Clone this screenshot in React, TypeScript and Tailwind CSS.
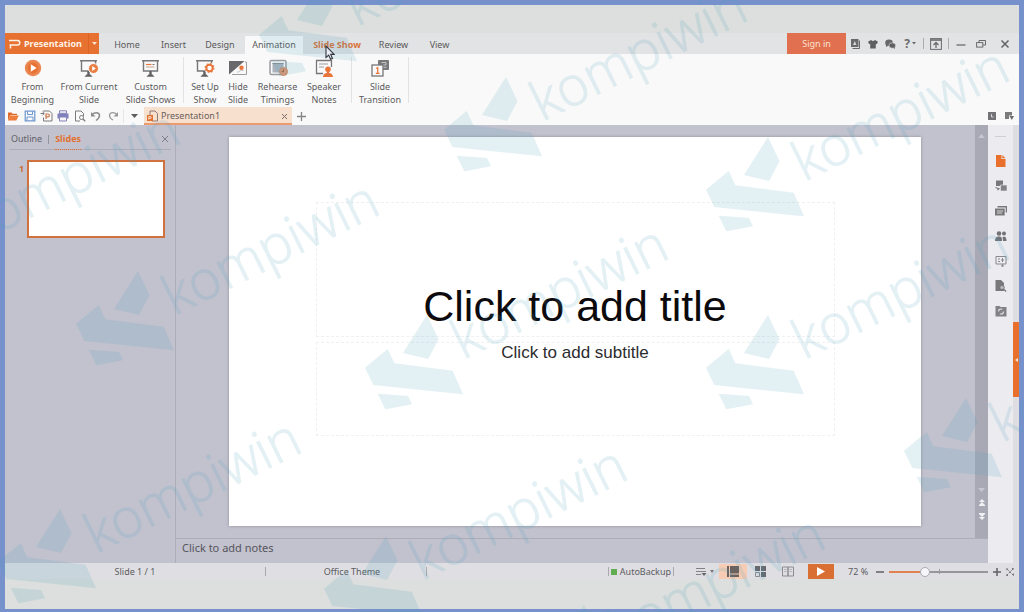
import React, { useState } from "react";

type IconProps = { children: React.ReactNode; w?: number; h?: number };

function Icon({ children, w = 18, h = 18 }: IconProps) {
  return (
    <svg width={w} height={h} viewBox={`0 0 ${w} ${h}`} fill="none" aria-hidden="true" className="shrink-0">
      {children}
    </svg>
  );
}

const GRAY = "#77777a";
const ORANGE = "#e8763a";

function Board() {
  return (
    <>
      <path d="M1 1.800h17M2.500 2v10h14V2" stroke={GRAY} strokeWidth="1.400" />
      <path d="M9.500 12v4" stroke="#606062" strokeWidth="2.400" />
      <path d="M5.500 17.800l2-2.300h4l2 2.300z" fill="#606062" />
    </>
  );
}

type Tool = { lines: [string, string]; width: string; icon: React.ReactNode };

const playTools: Tool[] = [
  {
    lines: ["From", "Beginning"],
    width: "w-[55px]",
    icon: (
      <Icon>
        <circle cx="9" cy="9" r="8.200" fill="#ea8650" />
        <circle cx="9" cy="9" r="5.400" fill="#e87234" />
        <path d="M6.800 5.200v7.600L12.600 9z" fill="#fff" />
      </Icon>
    ),
  },
  {
    lines: ["From Current", "Slide"],
    width: "w-[58px]",
    icon: (
      <Icon w={20}>
        <Board />
        <circle cx="14.500" cy="9.500" r="5" fill="#ea7d42" stroke="#fafafa" />
        <path d="M13.200 7v5l3.600-2.500z" fill="#fff" />
      </Icon>
    ),
  },
  {
    lines: ["Custom", "Slide Shows"],
    width: "w-[65px]",
    icon: (
      <Icon w={20}>
        <Board />
        <path d="M5 5.500h5.500" stroke={ORANGE} strokeWidth="1.200" />
        <path d="M11.500 5.500h2" stroke={GRAY} strokeWidth="1" />
        <path d="M5 8h8.500" stroke="#c8a48e" strokeWidth="1" />
      </Icon>
    ),
  },
];

const setupTools: Tool[] = [
  {
    lines: ["Set Up", "Show"],
    width: "w-[34px]",
    icon: (
      <Icon w={20}>
        <Board />
        <circle cx="14.500" cy="9" r="5.500" fill="#fafafa" />
        <circle cx="14.500" cy="9" r="3.200" stroke={ORANGE} strokeWidth="2" />
        <circle cx="14.500" cy="9" r="4.400" stroke={ORANGE} strokeWidth="1.200" strokeDasharray="1.700 1.750" />
      </Icon>
    ),
  },
  {
    lines: ["Hide", "Slide"],
    width: "w-[32px]",
    icon: (
      <Icon>
        <path d="M0 2h15.500L0 15.500z" fill="#69696b" />
        <path d="M16 3h1.500v12.500H3" stroke="#9d9d9f" />
        <circle cx="12.500" cy="8.800" r="2.200" fill={ORANGE} />
        <path d="M8 13h2l1-1.500h3.500" stroke="#c9c9cb" />
      </Icon>
    ),
  },
  {
    lines: ["Rehearse", "Timings"],
    width: "w-[47px]",
    icon: (
      <Icon w={20}>
        <rect x="2" y="1.500" width="16" height="14" rx="1.500" stroke="#9a9ca2" strokeWidth="1.500" />
        <rect x="4.500" y="4" width="11" height="9.500" fill="#aab2bc" />
        <path d="M4.500 4.500h11" stroke="#8a8c92" />
        <circle cx="15.500" cy="12.500" r="4" fill="#e39a72" stroke="#cf8a68" />
        <path d="M15.500 10.300v2.400h-2" stroke="#9d5f45" />
      </Icon>
    ),
  },
  {
    lines: ["Speaker", "Notes"],
    width: "w-[46px]",
    icon: (
      <Icon>
        <path d="M8 14.500H1.500V1.500h15V8" stroke="#77777a" strokeWidth="1.300" />
        <path d="M4 5h9M4 8h5" stroke="#9b9b9e" strokeWidth="1.200" />
        <circle cx="13" cy="10.300" r="2.800" fill={ORANGE} />
        <path d="M8 18c0-3 2.200-3.800 3.900-4v-1.500h2.200V14c1.700.2 3.900 1 3.900 4z" fill={ORANGE} />
      </Icon>
    ),
  },
];

const transitionTools: Tool[] = [
  {
    lines: ["Slide", "Transition"],
    width: "w-[56px]",
    icon: (
      <Icon>
        <rect x="7" y="1" width="11" height="10" rx="1" fill="#78787a" />
        <path d="M10.500 3.500h4.500v2.500h-3v2.300h3.500" stroke="#c4c4c6" />
        <rect x="1" y="6" width="11" height="11" fill="#fafafa" stroke="#77777a" strokeWidth="1.300" />
        <path d="M5 9.500l1.700-.8v5.600M4.800 14.300h3.800" stroke={ORANGE} strokeWidth="1.300" />
      </Icon>
    ),
  },
];

function ToolGroup({ tools }: { tools: Tool[] }) {
  return (
    <div className="flex">
      {tools.map((t) => (
        <button key={t.lines.join(" ")} type="button" className={`flex flex-col items-center gap-[3px] whitespace-nowrap ${t.width}`}>
          {t.icon}
          <span className="text-[9px] leading-[13px] text-[#5b5b5d]">
            {t.lines[0]}
            <br />
            {t.lines[1]}
          </span>
        </button>
      ))}
    </div>
  );
}

const menuTabs = [
  { label: "Home", cls: "w-[46px]" },
  { label: "Insert", cls: "w-[47px]" },
  { label: "Design", cls: "w-[46px]" },
  { label: "Animation", cls: "w-[58px] bg-[#f9f9f9] ml-[2px]" },
  { label: "Slide Show", cls: "w-[68px] font-bold text-[#d9713a]" },
  { label: "Review", cls: "w-[45px]" },
  { label: "View", cls: "w-[47px]" },
];

function MenuBar() {
  return (
    <header className="flex h-[21px] bg-[#e2e3e5] text-[9px] text-[#59595b]">
      <button type="button" className="flex w-[94px] shrink-0 items-center bg-[#e67130] pl-[3px] font-bold text-[#fff1e6]">
        <Icon w={13} h={12}>
          <path d="M1 2.500h8.500a2 2 0 0 1 0 4.500H1.500M2.500 7v3.500" stroke="#fff1e6" strokeWidth="1.500" />
        </Icon>
        <span className="ml-[3px] flex-1 text-left">Presentation</span>
        <span className="flex h-full w-[11px] items-center justify-center border-l border-[#dd6423]">
          <Icon w={5} h={3}>
            <path d="M0 0h5L2.500 3z" fill="#ffe4d2" />
          </Icon>
        </span>
      </button>
      <nav className="ml-[5px] flex items-stretch pt-[3px]">
        {menuTabs.map((t) => (
          <button key={t.label} type="button" className={`whitespace-nowrap ${t.cls}`}>
            {t.label}
          </button>
        ))}
      </nav>
      <div className="ml-auto flex items-stretch">
        <button type="button" className="w-[59px] bg-[#e07050] text-[#ffe2d0]">
          Sign in
        </button>
        <button type="button" aria-label="Account" className="flex w-[19px] items-center justify-center">
          <Icon w={9} h={10}>
            <path d="M0 0h7.500v8H0z" fill="#69696b" />
            <path d="M8.500 1.500v8H1.500" stroke="#69696b" />
            <path d="M2 6l1.800-4L5.500 6z" fill="#d5d5d7" />
          </Icon>
        </button>
        <button type="button" aria-label="Skin" className="flex w-[16px] items-center justify-center">
          <Icon w={10} h={10}>
            <path d="M3 1l2 1.200L7 1l3 1.800-1.200 2.400-1-.4V9.500H2.200V4.800l-1 .4L0 2.800z" fill="#5f5f61" />
          </Icon>
        </button>
        <button type="button" aria-label="Chat" className="flex w-[18px] items-center justify-center">
          <Icon w={11} h={10}>
            <ellipse cx="4" cy="3.700" rx="3.800" ry="3.200" fill="#69696b" />
            <path d="M1 5v3l2.500-1.500z" fill="#69696b" />
            <ellipse cx="7.300" cy="6.500" rx="3.300" ry="2.700" fill="#5f5f61" stroke="#e2e3e5" strokeWidth=".6" />
            <path d="M8 8.500l1.800 1.500V8z" fill="#5f5f61" />
          </Icon>
        </button>
        <button type="button" className="flex w-[22px] items-center justify-center gap-[2px] text-[12px] font-bold text-[#6b6b6d]">
          ?
          <Icon w={4} h={3}>
            <path d="M0 0h4L2 2.500z" fill="#6b6b6d" />
          </Icon>
        </button>
        <i className="mx-[2px] my-[5px] w-px bg-[#adadaf]" />
        <button type="button" aria-label="Collapse ribbon" className="flex w-[20px] items-center justify-center">
          <Icon w={12} h={12}>
            <rect x=".6" y=".6" width="10.800" height="10.800" stroke="#6b6b6d" />
            <path d="M0 2h12" stroke="#6b6b6d" strokeWidth="1.600" />
            <path d="M6 10V5M3.500 7L6 4.500 8.500 7" stroke="#6b6b6d" strokeWidth="1.300" />
          </Icon>
        </button>
        <i className="mx-[2px] my-[5px] w-px bg-[#adadaf]" />
        <button type="button" aria-label="Minimize" className="flex w-[20px] items-center justify-center">
          <Icon w={10} h={10}>
            <path d="M.5 6h9" stroke="#6b6b6d" strokeWidth="1.300" />
          </Icon>
        </button>
        <button type="button" aria-label="Restore" className="flex w-[20px] items-center justify-center">
          <Icon w={10} h={10}>
            <path d="M3 3.500V1.500h6.500v4.500H7" stroke="#6b6b6d" />
            <rect x=".6" y="3.600" width="6.200" height="4.500" stroke="#6b6b6d" />
          </Icon>
        </button>
        <button type="button" aria-label="Close" className="flex w-[28px] items-center justify-center">
          <Icon w={10} h={10}>
            <path d="M1.500 1.500l7 7M8.500 1.500l-7 7" stroke="#636365" strokeWidth="1.500" />
          </Icon>
        </button>
      </div>
    </header>
  );
}

function Ribbon() {
  const sep = <i className="mb-[3px] mt-[-2px] w-px bg-[#e3e3e5]" />;
  return (
    <section aria-label="Slide show tools" className="flex bg-[#f9f9f9] pb-px pt-[5px]">
      <ToolGroup tools={playTools} />
      {sep}
      <div className="px-1">
        <ToolGroup tools={setupTools} />
      </div>
      {sep}
      <ToolGroup tools={transitionTools} />
      {sep}
    </section>
  );
}

const quickTools: { name: string; icon: React.ReactNode }[] = [
  {
    name: "Open",
    icon: (
      <Icon w={12} h={12}>
        <path d="M1 10.500V2.500h3.500l1 1.200H10V5H3.500z" fill="#df6a2c" />
        <path d="M1 10.500L3.300 5.500h8.500l-2.500 5z" fill="#ee7d3b" />
      </Icon>
    ),
  },
  {
    name: "Save",
    icon: (
      <Icon w={12} h={12}>
        <path d="M1.200 1.200h9.600v9.600H1.200z" stroke="#6d97cf" strokeWidth="1.200" />
        <path d="M3.500 1.500v3h5v-3M3 10.500V7h6v3.500" stroke="#6d97cf" />
      </Icon>
    ),
  },
  {
    name: "Export",
    icon: (
      <Icon w={13} h={12}>
        <path d="M3 1h6.500L12 3.500V11H3.500V7.500" stroke="#7b7b7d" />
        <path d="M6 9V4h2a1.400 1.400 0 0 1 0 2.800H6" stroke="#c9764a" strokeWidth="1.200" />
        <path d="M.5 3.500h3.500M2.500 1.800L4.300 3.500 2.500 5.200" stroke="#7b7b7d" />
      </Icon>
    ),
  },
  {
    name: "Print",
    icon: (
      <Icon w={12} h={12}>
        <path d="M2.500.8h7v2.500h-7z" stroke="#8484bb" />
        <path d="M.5 3.500h11v5H.5z" fill="#7f7fbb" />
        <path d="M2.500 7h7v4h-7z" fill="#f6f6fb" stroke="#8484bb" />
      </Icon>
    ),
  },
  {
    name: "Print preview",
    icon: (
      <Icon w={12} h={12}>
        <path d="M6 11H1.500V1H7l2.500 2.500V6" stroke="#7b7b7d" />
        <circle cx="7.500" cy="7.500" r="2" stroke="#7b7b7d" />
        <path d="M9 9l2.200 2.200" stroke="#7b7b7d" strokeWidth="1.300" />
      </Icon>
    ),
  },
  {
    name: "Undo",
    icon: (
      <Icon w={12} h={12}>
        <path d="M2 5C3.500 2 9.500 1.500 9.500 5.500c0 2-1.500 3.500-3.500 5" stroke="#8c8c8e" strokeWidth="1.500" />
        <path d="M1 2v4.500h4.500z" fill="#8c8c8e" />
      </Icon>
    ),
  },
  {
    name: "Redo",
    icon: (
      <Icon w={12} h={12}>
        <path d="M10 5C8.500 2 2.500 1.500 2.500 5.500c0 2 1.500 3.500 3.500 4.500" stroke="#9a9a9c" strokeWidth="1.300" />
        <path d="M11 2v4.500H6.500z" fill="#9a9a9c" />
      </Icon>
    ),
  },
];

function DocumentBar() {
  return (
    <div className="flex h-[18px] bg-[#f9f9f9] text-[9px] text-[#69605b]">
      <div className="flex w-[116px]">
        {quickTools.map((q) => (
          <button key={q.name} type="button" aria-label={q.name} className="flex flex-1 items-center justify-center">
            {q.icon}
          </button>
        ))}
      </div>
      <i className="ml-[2px] my-[2px] w-px bg-[#e6e6e8]" />
      <button type="button" aria-label="Customize toolbar" className="flex w-[20px] items-center justify-center">
        <Icon w={7} h={4}>
          <path d="M0 0h7L3.500 4z" fill="#5d5d5f" />
        </Icon>
      </button>
      <div className="flex w-[148px] items-center border-b-2 border-[#ec9a70] bg-[#f8e0cf] px-[3px] pt-[2px]">
        <Icon w={11} h={12}>
          <path d="M3 5V1h5l2.500 2.500V11H5" stroke="#8a7a72" />
          <path d="M0 5h6v6H0z" fill="#e2702f" />
          <path d="M1.800 9.500V6.600h1.600a.9.9 0 0 1 0 1.800H1.800" stroke="#fff" strokeWidth=".8" />
        </Icon>
        <span className="ml-[3px] flex-1">Presentation1</span>
        <button type="button" aria-label="Close Presentation1" className="flex h-3 w-[10px] items-center justify-center">
          <Icon w={7} h={7}>
            <path d="M1 1l5 5M6 1L1 6" stroke="#7c6e66" />
          </Icon>
        </button>
      </div>
      <button type="button" aria-label="New tab" className="flex w-[18px] items-center justify-center">
        <Icon w={9} h={9}>
          <path d="M4.500 0v9M0 4.500h9" stroke="#858587" strokeWidth="1.300" />
        </Icon>
      </button>
      <div className="ml-auto flex items-center gap-[9px] pr-[5px]">
        <button type="button" aria-label="Tab list">
          <Icon w={8} h={8}>
            <path d="M0 0h8v8H0z" fill="#737375" />
            <path d="M3.500 2v3h2" stroke="#d5d5d7" />
          </Icon>
        </button>
        <button type="button" aria-label="Window options">
          <Icon w={9} h={8}>
            <path d="M0 0h7v3.500H4V7H0z" fill="#7b7b7d" />
            <path d="M4.500 4h4.500L6.800 8z" fill="#6b6b6d" />
          </Icon>
        </button>
      </div>
    </div>
  );
}

function SlidePane() {
  return (
    <aside className="w-[170px] shrink-0 px-1 text-[9px] text-[#626168]">
      <div className="flex h-[25px] items-center border-b border-[#adadb8] pl-[2px] pr-[2px] pt-1">
        <button type="button">Outline</button>
        <i className="mx-[6px] h-[9px] w-px bg-[#95959d]" />
        <button type="button" className="-mb-px h-[21px] border-b border-dotted border-[#e2763c] font-bold text-[#e2702f]">
          Slides
        </button>
        <button type="button" aria-label="Close pane" className="ml-auto">
          <Icon w={8} h={8}>
            <path d="M1 1l6 6M7 1L1 7" stroke="#7e7e86" />
          </Icon>
        </button>
      </div>
      <div className="flex gap-[3px] pl-[10px] pt-[10px]">
        <span className="mt-[2px] w-[5px] font-bold leading-[13px] text-[#cf6c35]">1</span>
        <button type="button" aria-label="Slide 1" className="aspect-video w-[138px] border-2 border-[#cf7240] bg-white" />
      </div>
    </aside>
  );
}

function SlideCanvas() {
  return (
    <div className="flex flex-1 pb-3 pl-[53px] pr-[54px] pt-3">
      <article className="grid aspect-video w-full grid-rows-[65fr_135fr_5fr_94fr_90fr] self-start bg-white px-[12.5%] font-['Liberation_Sans',Arial,sans-serif] shadow-[0_0_3px_#8f8f99]">
        <h1 className="row-start-2 flex items-end justify-center border border-dashed border-[#f0f0f0] pb-[5px] text-[43px] leading-[49px] text-[#0c0a0d]">
          Click to add title
        </h1>
        <p className="row-start-4 border border-dashed border-[#f0f0f0] text-center text-[17px] leading-5 text-[#2c2c2e]">
          Click to add subtitle
        </p>
      </article>
    </div>
  );
}

function ScrollBar() {
  return (
    <div className="flex w-[13px] shrink-0 flex-col items-center bg-[#a8a9b5] pb-[18px] pt-[9px]">
      <button type="button" aria-label="Scroll up">
        <Icon w={7} h={4}>
          <path d="M0 4h7L3.500 0z" fill="#c6c6d0" />
        </Icon>
      </button>
      <div className="mt-auto flex flex-col items-center gap-[7px]">
        <button type="button" aria-label="Scroll down">
          <Icon w={7} h={4}>
            <path d="M0 0h7L3.500 4z" fill="#c6c6d0" />
          </Icon>
        </button>
        <button type="button" aria-label="Previous slide">
          <Icon w={6} h={7}>
            <path d="M0 3h6L3 0zM0 6h6L3 3zM0 6h6v1H0z" fill="#f1f1f5" />
          </Icon>
        </button>
        <button type="button" aria-label="Next slide">
          <Icon w={6} h={7}>
            <path d="M0 4h6L3 7zM0 1h6L3 4zM0 0h6v1H0z" fill="#f1f1f5" />
          </Icon>
        </button>
      </div>
    </div>
  );
}

const sideTools: { name: string; icon: React.ReactNode }[] = [
  {
    name: "New slide",
    icon: (
      <Icon w={12} h={12}>
        <path d="M1 0h5.500v4h4V12H1z" fill="#e8702c" />
        <path d="M7.300 0L10.500 3.200H7.300z" fill="#e8702c" />
      </Icon>
    ),
  },
  {
    name: "Layout",
    icon: (
      <Icon w={12} h={12}>
        <path d="M1 .5h7v5.500H1z" fill="#78787b" />
        <path d="M5.500 5h6.500v6H5.500z" fill="#828285" stroke="#ececf0" strokeWidth=".6" />
        <path d="M.5 7.500l3.500 1.200-1.500 1.500" stroke="#78787b" strokeWidth="1.200" />
      </Icon>
    ),
  },
  {
    name: "Object",
    icon: (
      <Icon w={12} h={12}>
        <path d="M2.500 1.700h9V7.500" stroke="#78787b" strokeWidth="1.600" />
        <path d="M0 3.500h9.700v7H0z" fill="#78787b" />
        <path d="M2 6h6M2 8h5" stroke="#d2d2d6" />
      </Icon>
    ),
  },
  {
    name: "Share",
    icon: (
      <Icon w={12} h={12}>
        <circle cx="4" cy="3.500" r="2.300" fill="#737376" />
        <circle cx="9" cy="3.500" r="2" fill="#737376" />
        <path d="M0 11C.3 7 2 6.500 4 6.500S7 7 7 11zM7.500 7c3-1 4 0 4 4H8z" fill="#737376" />
      </Icon>
    ),
  },
  {
    name: "Animation",
    icon: (
      <Icon w={12} h={12}>
        <path d="M1 1.500h10V9H1z" stroke="#89898c" />
        <path d="M3 4h2M3 6.500h2M7.500 3v4M6 5h3M7.500 9v2.500M6 10.500l1.500 1.300L9 10.500" stroke="#89898c" />
      </Icon>
    ),
  },
  {
    name: "Find",
    icon: (
      <Icon w={12} h={12}>
        <path d="M.5 0h5.500l3 3v8H.5z" fill="#78787b" />
        <circle cx="7" cy="7.500" r="2.200" fill="#b9b9bd" stroke="#78787b" />
        <path d="M8.700 9.300l2.500 2.200" stroke="#78787b" strokeWidth="1.300" />
      </Icon>
    ),
  },
  {
    name: "Backup",
    icon: (
      <Icon w={12} h={12}>
        <path d="M.5 1h4l1 1h6v9.500H.5z" fill="#828285" />
        <circle cx="6" cy="6.500" r="2.500" stroke="#e4e4e8" strokeDasharray="5 2.800" strokeWidth="1.200" />
      </Icon>
    ),
  },
];

function SideBar() {
  return (
    <aside className="flex shrink-0">
      <div className="flex w-[25px] flex-col items-center bg-[#ecebf0] pt-[11px]">
        <i className="mb-[11px] h-px w-[11px] bg-[#cfcfd5]" />
        {sideTools.map((t) => (
          <button key={t.name} type="button" aria-label={t.name} className="flex h-[25px] items-center justify-center">
            {t.icon}
          </button>
        ))}
      </div>
      <div className="w-[6px] bg-[#dedee2] pt-[197px]">
        <button type="button" aria-label="Expand panel" className="flex h-[75px] w-full items-center justify-center bg-[#e8702c]">
          <Icon w={3} h={4}>
            <path d="M3 0v4L0 2z" fill="#ffe0cc" />
          </Icon>
        </button>
      </div>
    </aside>
  );
}

function StatusBar() {
  const [zoom, setZoom] = useState(35);
  const sep = <i className="h-[9px] w-px bg-[#a9a9ae]" />;
  return (
    <footer className="flex h-[16px] items-center bg-[#dfdfe3] pt-px text-[9px] text-[#5c5c60]">
      <span className="w-[260px] text-center">Slide 1 / 1</span>
      {sep}
      <span className="w-[160px] pl-[12px] text-center">Office Theme</span>
      {sep}
      <div className="ml-auto flex h-full items-center">
        {sep}
        <span className="flex items-center gap-[3px] px-[2px]">
          <i className="size-[6px] bg-[#62ad52]" />
          AutoBackup
        </span>
        {sep}
        <button type="button" aria-label="Notes options" className="ml-[21px] flex w-[24px] items-center gap-[3px]">
          <Icon w={12} h={10}>
            <path d="M1 1.500h9M1 4.500h10M1 7.500h5" stroke="#828286" />
            <path d="M6.500 6h5L9 9z" fill="#66666a" />
          </Icon>
          <Icon w={4} h={3}>
            <path d="M0 0h4L2 3z" fill="#77777b" />
          </Icon>
        </button>
        <button type="button" aria-label="Normal view" className="flex h-full w-[28px] items-center justify-center bg-[#f6cdb4]">
          <Icon w={12} h={11}>
            <path d="M0 0h2v11H0zM3 0h9v7.500H3zM3 8.500h9V11H3z" fill="#6a625f" />
          </Icon>
        </button>
        <button type="button" aria-label="Slide sorter" className="flex h-full w-[27px] items-center justify-center">
          <Icon w={11} h={11}>
            <path d="M0 0h5v5H0zM6 0h5v5H6zM6 6h5v5H6z" fill="#68686d" />
            <path d="M.5 6.500h4v4h-4z" stroke="#8b8b90" />
          </Icon>
        </button>
        <button type="button" aria-label="Reading view" className="flex h-full w-[28px] items-center justify-center">
          <Icon w={12} h={11}>
            <path d="M.5 1h5.500v9H.5zM6 1h5.500v9H6z" stroke="#8b8b90" />
            <path d="M2 3.500h2.500M2 5.500h2.500M7.500 3.500H10M7.500 5.500H10" stroke="#b4b4b9" />
          </Icon>
        </button>
        <button type="button" aria-label="Start slide show" className="ml-[6px] flex h-full w-[26px] items-center justify-center bg-[#d96f33]">
          <Icon w={8} h={9}>
            <path d="M0 0v9l8-4.500z" fill="#fff" />
          </Icon>
        </button>
        <label htmlFor="zoom" className="ml-[14px] w-[25px] whitespace-nowrap">
          72 %
        </label>
        <button type="button" aria-label="Zoom out" className="flex w-[14px] justify-center">
          <Icon w={8} h={8}>
            <path d="M0 4h8" stroke="#626266" strokeWidth="1.500" />
          </Icon>
        </button>
        <div className="relative mx-[2px] flex h-full w-[99px] items-center">
          <i className="absolute left-1/2 h-[5px] w-px bg-[#9b9ba0]" />
          <input
            id="zoom"
            type="range"
            value={zoom}
            onChange={(e) => setZoom(Number(e.target.value))}
            className="relative h-[2px] w-full appearance-none bg-[linear-gradient(to_right,#e0824f_36%,#97979b_36%)] [&::-webkit-slider-thumb]:size-[10px] [&::-webkit-slider-thumb]:appearance-none [&::-webkit-slider-thumb]:rounded-full [&::-webkit-slider-thumb]:border [&::-webkit-slider-thumb]:border-solid [&::-webkit-slider-thumb]:border-[#aaaaae] [&::-webkit-slider-thumb]:bg-[#f7f7f9]"
          />
        </div>
        <button type="button" aria-label="Zoom in" className="flex w-[14px] justify-center">
          <Icon w={8} h={8}>
            <path d="M0 4h8M4 0v8" stroke="#626266" strokeWidth="1.500" />
          </Icon>
        </button>
        <button type="button" aria-label="Fit to window" className="mr-[3px] flex w-[12px] justify-center">
          <Icon w={8} h={8}>
            <path d="M0 2.500V.5h2M6 .5h1.500v2M7.500 5.500v2H6M2 7.500H.5v-2M1 1l6 6M7 1L1 7" stroke="#77777b" strokeDasharray="2.500 1" />
          </Icon>
        </button>
      </div>
    </footer>
  );
}

const markSpots: [number, number][] = [
  [-61, 200],
  [138, 271],
  [321, -18],
  [506, 77],
  [768, 137],
  [768, 315],
  [427, 315],
  [60, 509],
  [386, 536],
  [584, 605],
  [966, 398],
];

function Watermark() {
  return (
    <div className="pointer-events-none absolute -inset-[5px] overflow-hidden">
      <svg className="h-full w-full" fill="#4ba0bc" opacity=".15">
        {markSpots.map(([x, y]) => (
          <g key={`${x},${y}`} transform={`translate(${x} ${y})`}>
            <path d="M0 0L11.500 24.300 1 44-24 38z" />
            <path d="M-39.300 34L-32.600 48.300 25.700 55.700 36 79.300-53.600 70-62 52.700z" />
            <path d="M-49.300 78.700L-19 81-15 89.300-41.600 94.300z" />
            <text
              transform="translate(36 45) rotate(-26.300)"
              fontSize="54"
              fontWeight="300"
              stroke="#4ba0bc"
              strokeWidth="1"
              fontFamily="'Open Sans', 'Noto Sans', sans-serif"
            >
              kompiwin
            </text>
          </g>
        ))}
      </svg>
    </div>
  );
}

export default function App() {
  return (
    <div className="relative flex min-h-screen flex-col border-x-[5px] border-b-4 border-t-[5px] border-[#7791cc] bg-[#dcdfdd] font-['Noto_Sans','Open_Sans',sans-serif]">
      <div className="h-[28px]" />
      <MenuBar />
      <Ribbon />
      <DocumentBar />
      <div className="flex flex-1 bg-[#c2c2ce]">
        <SlidePane />
        <main className="flex min-w-0 flex-1 flex-col border-l border-[#adadb8]">
          <div className="flex flex-1">
            <SlideCanvas />
            <ScrollBar />
          </div>
          <button type="button" className="h-[25px] border-t border-[#adadb8] px-[6px] pb-[6px] text-left text-[11px] leading-[18px] text-[#56555c]">
            Click to add notes
          </button>
        </main>
        <SideBar />
      </div>
      <StatusBar />
      <div className="h-[30px]" />
      <Watermark />
      <svg width="10" height="16" viewBox="0 0 10 16" className="pointer-events-none absolute left-[320px] top-[40px]" aria-hidden="true">
        <path d="M1 1v11.500l2.700-2.400 1.900 4.200 1.900-.9-1.800-4h3.500z" fill="#e9eef4" stroke="#34363f" strokeWidth="1.100" />
      </svg>
    </div>
  );
}
